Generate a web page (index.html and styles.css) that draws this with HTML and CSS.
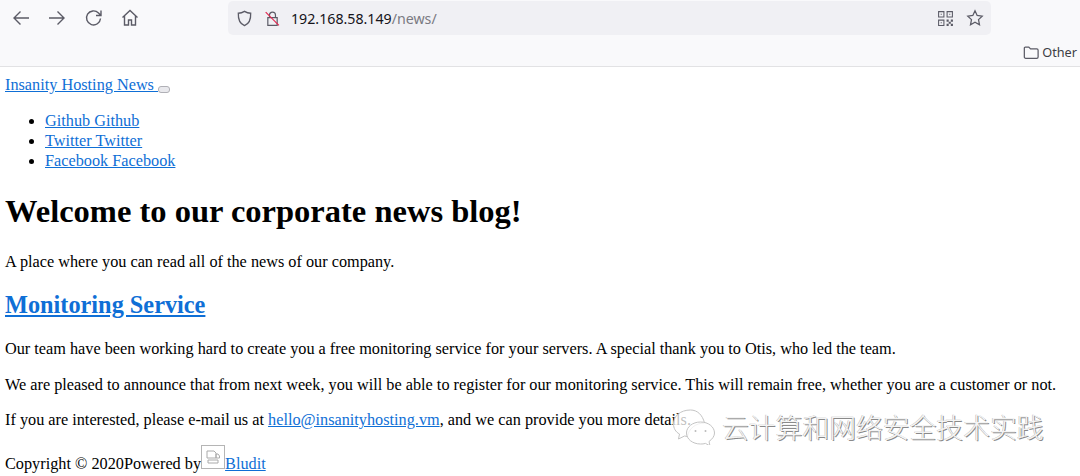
FILE: index.html
```html
<!DOCTYPE html>
<html lang="en">
<head>
<meta charset="utf-8">
<title>Insanity Hosting News</title>
<link rel="stylesheet" href="styles.css">
</head>
<body>
<header class="chrome">
  <div class="toolbar">
    <nav class="nav-icons">
      <svg class="icon" viewBox="0 0 20 20"><path d="M18 10H3M9.500 3.500 3 10l6.500 6.500"/></svg>
      <svg class="icon" viewBox="0 0 20 20"><path d="M2 10h15M10.500 3.500 17 10l-6.500 6.500"/></svg>
      <svg class="icon" viewBox="0 0 20 20"><path d="M16.500 10.500a7 7 0 1 1-2-5.500l2.500 2.500M17 2.500v5h-5"/></svg>
      <svg class="icon" viewBox="0 0 20 20"><path d="M2.500 9.500 10 2.500l7.500 7M4.500 8v9h4v-5h3v5h4V8"/></svg>
    </nav>
    <div class="urlbar">
      <svg class="icon shield" viewBox="0 0 20 20"><path d="M10 2.500c2 1.300 4.500 2 6.500 2 .3 6.500-1.500 11-6.500 13-5-2-6.800-6.500-6.500-13 2 0 4.500-.7 6.500-2z"/></svg>
      <svg class="icon lock" viewBox="0 0 20 20"><path d="M6.500 9V6a3.500 3.500 0 0 1 7 0v3M4.500 9h11v9h-11z"/><path class="slash" d="M2 2.500 17.500 18"/></svg>
      <span class="url"><span class="host">192.168.58.149</span><span class="path">/news/</span></span>
      <span class="url-end">
        <svg class="icon qr" viewBox="0 0 16 16"><path d="M1.500 1.500h5v5h-5zM9.500 1.500h5v5h-5zM1.500 9.500h5v5h-5z"/><path d="M9 9h2v2H9zM13 9h2v2h-2zM11 11h2v2h-2zM9 13h2v2H9zM13 13h2v2h-2zM3.500 3.500h1v1h-1zM11.500 3.500h1v1h-1zM3.500 11.500h1v1h-1z" class="qr-fill"/></svg>
        <svg class="icon star" viewBox="0 0 20 20"><path d="m10 2 2.400 5.200 5.600.7-4.100 3.900 1.100 5.700L10 14.800l-5 2.700 1.100-5.700L2 7.900l5.600-.7z"/></svg>
      </span>
    </div>
  </div>
  <div class="bookmarks">
    <svg class="icon folder" viewBox="0 0 18 16"><path d="M1.500 13V3a1 1 0 0 1 1-1h4l2 2h7a1.500 1.500 0 0 1 1.500 1.500V13a1.500 1.500 0 0 1-1.500 1.500H3A1.500 1.500 0 0 1 1.500 13z"/></svg>
    <span class="bookmark-label">Other</span>
  </div>
</header>

<main class="page">
  <div class="brand-row"><a href="#">Insanity Hosting News </a><button class="toggler" type="button"></button></div>
  <ul class="social">
    <li><a href="#">Github Github</a></li>
    <li><a href="#">Twitter Twitter</a></li>
    <li><a href="#">Facebook Facebook</a></li>
  </ul>
  <h1>Welcome to our corporate news blog!</h1>
  <p>A place where you can read all of the news of our company.</p>
  <h2><a href="#">Monitoring Service</a></h2>
  <p>Our team have been working hard to create you a free monitoring service for your servers. A special thank you to Otis, who led the team.</p>
  <p>We are pleased to announce that from next week, you will be able to register for our monitoring service. This will remain free, whether you are a customer or not.</p>
  <p>If you are interested, please e-mail us at <a href="#">hello@insanityhosting.vm</a>, and we can provide you more details.</p>
  <footer class="foot">Copyright © 2020Powered by<span class="broken-img"><svg viewBox="0 0 16 16"><path d="M2 2h7l2 2v5H2zM3 11h10v3H3zM11 5h2l1.500 2v2H11z"/></svg></span><a href="#">Bludit</a></footer>
</main>

<div class="watermark">
  <svg class="wechat" viewBox="0 0 44 36"><path class="bubble" d="M19 1C9 1 2 7 2 15c0 4 2 8 6 10l-1 5 6-3 3 .5C17 20 24 14 33 14 31 6 26 1 19 1z"/><path class="bubble" d="M29 13c-8 0-14 5-14 11s6 11 14 11c2 0 3 0 5-.6l4.500 2.600-1-4.500C41 30 43 27 43 24c0-6-6-11-14-11z"/><circle cx="24" cy="22" r="1"/><circle cx="34" cy="22" r="1"/></svg>
  <span class="wm-text">云计算和网络安全技术实践</span>
</div>
</body>
</html>
```
FILE: styles.css
```css
html, body { margin: 0; padding: 0; }
body {
  width: 1080px;
  height: 476px;
  overflow: hidden;
  background: #fff;
  color: #000;
  font-family: "Liberation Serif", "Times New Roman", serif;
  font-size: 16.25px;
  position: relative;
}
.chrome {
  height: 67px;
  box-sizing: border-box;
  background: #f9f9fb;
  border-bottom: 1px solid #e2e2e4;
  font-family: "Noto Sans", "Open Sans", sans-serif;
}
.toolbar { display: flex; align-items: center; height: 36px; }
.nav-icons {
  display: flex;
  gap: 16.500px;
  padding-left: 10.500px;
  width: 216px;
  box-sizing: border-box;
}
.icon { width: 20px; height: 20px; fill: none; stroke: #5b5b66; stroke-width: 1.400; flex: none; }
.urlbar {
  width: 763px;
  height: 34px;
  background: #f0f0f4;
  border-radius: 5px;
  display: flex;
  align-items: center;
  margin-left: 12px;
  padding: 0 7px 0 7px;
  box-sizing: border-box;
}
.shield { width: 19px; height: 19px; }
.lock { width: 17px; height: 17px; margin-left: 10px; }
.lock .slash { stroke: #e22850; }
.url { margin-left: 10px; font-size: 14.200px; color: #15141a; white-space: nowrap; }
.path { color: #7a7a82; }
.url-end { margin-left: auto; display: flex; align-items: center; gap: 12px; }
.qr { width: 17px; height: 17px; stroke-width: 1; }
.qr-fill { fill: #5b5b66; stroke: none; }
.star { width: 18px; height: 18px; }
.bookmarks {
  height: 30px;
  display: flex;
  align-items: center;
  justify-content: flex-end;
  gap: 3px;
  padding-right: 3px;
  margin-top: 1px;
}
.folder { width: 16px; height: 15px; }
.bookmark-label { font-size: 12.700px; color: #3d3d44; }
.page { padding: 0 5px; }
a { color: #0f6fd6; text-decoration: underline; }
.brand-row { line-height: 18px; margin-top: 9px; }
.toggler {
  width: 12px;
  height: 7px;
  padding: 0;
  margin: 0;
  vertical-align: -2px;
  background: #e9e9ed;
  border: 1px solid #b0b0b6;
  border-radius: 3px;
}
.social { margin: 17px 0 0; padding: 0 0 0 40px; line-height: 20px; }
h1 { font-size: 32.500px; line-height: 37px; margin: 22px 0 0; }
p { margin: 0; line-height: 19px; }
h1 + p { margin-top: 23px; }
h2 { font-size: 24.300px; line-height: 28px; margin: 19px 0 0; }
h2 + p { margin-top: 21px; }
p + p { margin-top: 16.500px; }
.foot { margin-top: 15px; line-height: 19px; white-space: nowrap; }
.broken-img {
  display: inline-block;
  width: 24px;
  height: 24px;
  box-sizing: border-box;
  border: 1px solid #b5b5b5;
  vertical-align: baseline;
}
.broken-img svg { display: block; width: 16px; height: 16px; margin: 3px; fill: none; stroke: #aaa; stroke-width: 1; }
.watermark {
  position: absolute;
  left: 671px;
  top: 409px;
  display: flex;
  align-items: center;
  gap: 6px;
}
.wechat { width: 45px; height: 36px; fill: none; stroke: #c4c4c4; stroke-width: 1; }
.wechat .bubble { fill: rgba(255,255,255,.75); }
.wechat circle { fill: #bbb; stroke: none; }
.wm-text {
  font-family: "Noto Sans CJK SC", sans-serif;
  font-size: 26.800px;
  font-weight: 300;
  line-height: 36px;
  color: #f4f4f4;
  text-shadow: 1px 1px 0 #8a8a8a, -0.500px -0.500px 0 #b8b8b8;
  white-space: nowrap;
}
```
